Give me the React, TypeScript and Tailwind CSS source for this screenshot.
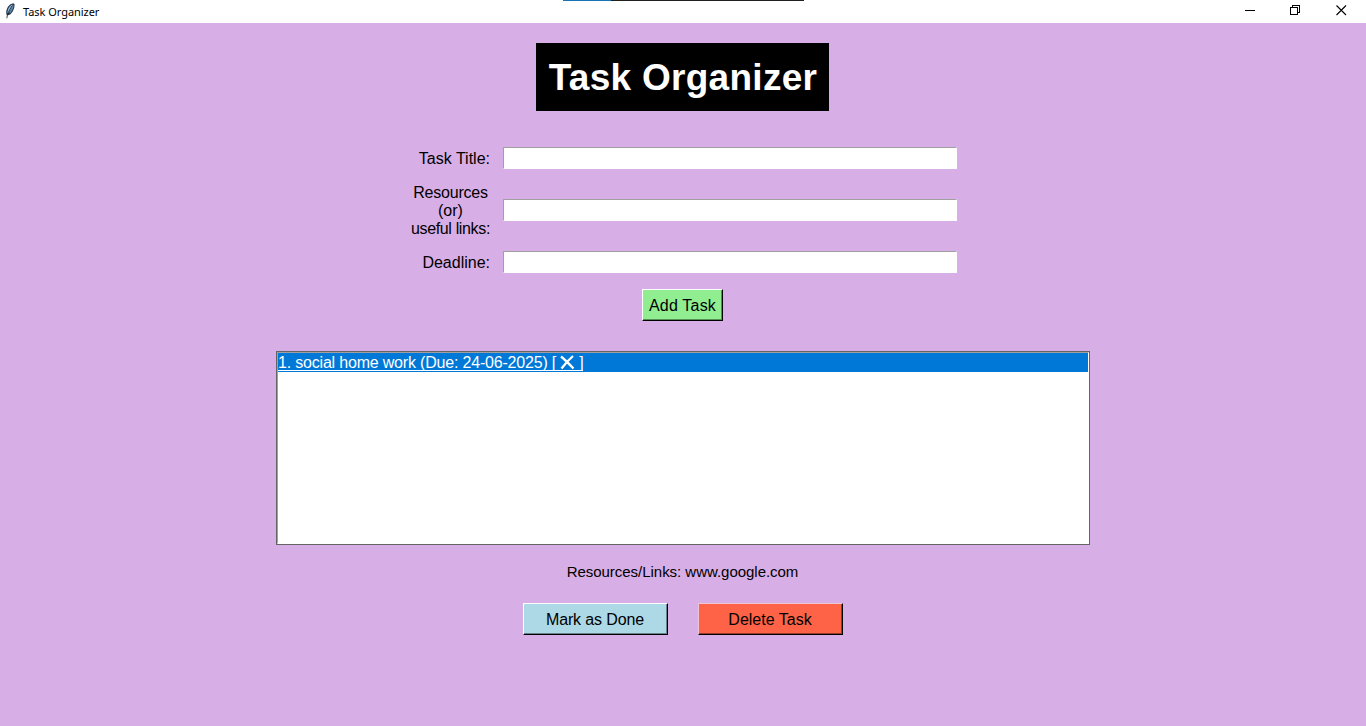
import type { ReactNode } from "react";

function FeatherIcon() {
  return (
    <svg width="16" height="16" viewBox="0 0 16 16" className="ml-[2px] mt-[3px] shrink-0">
      <path d="M5 12.4C3.2 9.4 4.6 4.6 7.6 1.9C9.2.5 11.4 0 12.4.8C12.8 3.2 12.2 5.7 10.8 8.2C9.5 10.5 7.8 12.2 5 12.4Z" fill="#25384f" />
      <path d="M5.7 10.8C4.8 8 6.6 4.3 9.3 2L10.8 1.8C10.2 5 8 8.4 5.7 10.8Z" fill="#9dbfe0" />
      <path d="M7.8 9.8C9.6 7.3 10.7 5 11.2 2.4" fill="none" stroke="#5b8bbb" strokeWidth="1.3" />
      <path d="M4.8 15.3C5.2 11.8 7 7.3 10.3 2.5" fill="none" stroke="#10151c" strokeWidth="0.8" />
    </svg>
  );
}

function TitleBar() {
  return (
    <header className="relative flex h-[23px] items-start bg-white">
      <FeatherIcon />
      <span className="ml-[5px] mt-[3px] font-['Noto_Sans',sans-serif] text-[11px] leading-[17px] tracking-[-0.04px]">
        Task Organizer
      </span>
      <div className="absolute left-[563px] top-0 flex h-px w-[241px] bg-[#202020]">
        <div className="w-12 bg-[#1874b5]" />
      </div>
      <div className="ml-auto mr-[19px] mt-[5px] flex gap-[35px]">
        <svg width="11" height="11" viewBox="0 0 11 11" shapeRendering="crispEdges">
          <path d="M1 5.5H11" stroke="#000" />
        </svg>
        <svg width="11" height="11" viewBox="0 0 11 11" fill="none" stroke="#000" shapeRendering="crispEdges">
          <path d="M.5 2.5H7.5V9.5H.5ZM2.5 2.5V.5H9.5V7.5H7.5" />
        </svg>
        <svg width="11" height="11" viewBox="0 0 11 11" fill="none" stroke="#000" strokeWidth="1.1">
          <path d="M.5.5L10 10M10 .5L.5 10" />
        </svg>
      </div>
    </header>
  );
}

function Field({ label, className }: { label: ReactNode; className: string }) {
  return (
    <label className={`flex items-center ${className}`}>
      <span className="flex w-[79px] justify-end whitespace-nowrap pt-0.5 text-center">{label}</span>
      <input className="ml-[13px] h-[22px] w-[454px] border border-b-white border-l-[#a0a0a0] border-r-white border-t-[#a0a0a0] bg-white px-px outline-none" />
    </label>
  );
}

function TkButton({ children, className }: { children: ReactNode; className: string }) {
  return (
    <button
      className={`h-8 whitespace-nowrap border border-b-black border-r-black pr-px pt-px leading-[18px] ${className}`}
    >
      {children}
    </button>
  );
}

export default function App() {
  return (
    <div className="flex h-[726px] flex-col overflow-hidden bg-[#d8aee6] font-['Liberation_Sans',Arial,sans-serif] text-[16px] leading-[18px] text-black">
      <TitleBar />
      <main className="flex flex-col items-center">
        <h1 className="mr-px mt-5 h-[68px] w-[293px] whitespace-nowrap bg-black pl-px text-center text-[37px] font-bold leading-[69px] tracking-[0.28px] text-white">
          Task Organizer
        </h1>
        <form className="mr-[-2px] mt-[36px] flex w-[546px] flex-col">
          <Field label="Task Title:" className="h-[22px]" />
          <Field
            label={
              <span>
                <span className="tracking-[-0.2px]">Resources</span>
                <br />
                (or)
                <br />
                <span className="tracking-[-0.35px]">useful links:</span>
              </span>
            }
            className="mt-[14px] h-[54px]"
          />
          <Field label="Deadline:" className="mt-[14px] h-[22px]" />
        </form>
        <TkButton className="mr-px mt-4 w-[81px] border-l-white border-t-white bg-[#90ee90] pl-px tracking-[0.2px] shadow-[inset_-1px_-1px_0_#568f56]">
          Add Task
        </TkButton>
        <div className="mt-[30px] h-[194px] w-[814px] border border-[#646464] bg-white">
          <ul className="h-full border border-b-white border-l-[#a0a0a0] border-r-white border-t-[#a0a0a0]">
            <li className="flex h-[19px] bg-[#0078d7] text-white">
              <span className="flex h-[18px] items-start border-b border-white">
                <span className="mt-px whitespace-pre tracking-[-0.19px]">1. social home work (Due: 24-06-2025) [ </span>
                <svg width="15" height="15" viewBox="0 0 15 15" className="mt-[2px]" fill="none" stroke="#fff" strokeWidth="2.3">
                  <path d="M1 1.5C5 4.8 9.5 9.3 13.5 13.5M13 1C9 4.5 5 9 1.5 13.5" />
                </svg>
                <span className="mt-px whitespace-pre tracking-[-0.4px]"> ]</span>
              </span>
            </li>
          </ul>
        </div>
        <p className="mr-px mt-[18px] text-[15px] leading-[18px] tracking-[-0.03px]">Resources/Links: www.google.com</p>
        <div className="mt-[22px] flex gap-[30px]">
          <TkButton className="w-[145px] border-l-white border-t-white bg-[#add8e6] tracking-[-0.12px] shadow-[inset_-1px_-1px_0_#68828a]">
            Mark as Done
          </TkButton>
          <TkButton className="w-[145px] border-l-[#f0c4d4] border-t-[#f0c4d4] bg-[#ff6347] shadow-[inset_-1px_-1px_0_#993b2b]">
            Delete Task
          </TkButton>
        </div>
      </main>
    </div>
  );
}
